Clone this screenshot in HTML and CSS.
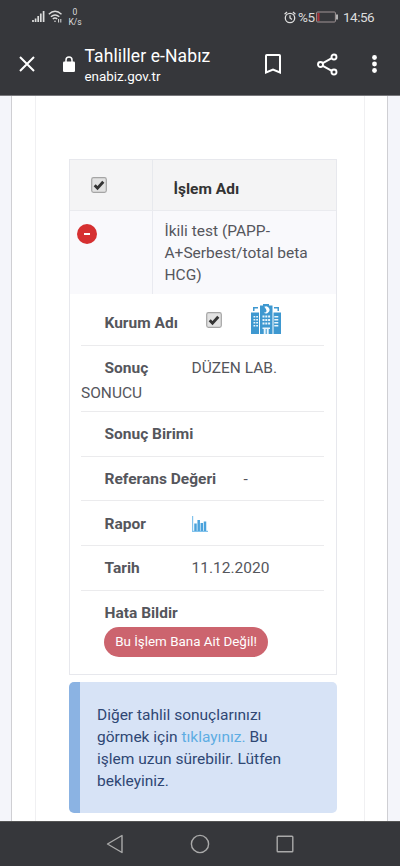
FILE: index.html
```html
<!DOCTYPE html>
<html lang="tr">
<head>
<meta charset="utf-8">
<title>Tahliller e-Nabız</title>
<link rel="stylesheet" href="styles.css">
</head>
<body>
<header class="top">
  <div class="status">
    <svg class="signal" width="13" height="13" viewBox="0 0 13 13"><path d="M1 12v-2M3.600 12V8.500M6.200 12V6M8.800 12V3.500M11.600 12V1" stroke="#ddd" stroke-width="1.700"/></svg>
    <svg class="wifi" width="15" height="13" viewBox="0 0 15 13" fill="none" stroke="#ddd" stroke-width="1.400"><path d="M.8 4.200Q7-1.500 13.500 4.200M2.900 6.800Q7 3.100 11.300 6.800M4.800 9Q7 7.100 9.200 9"/><circle cx="7" cy="11.200" r=".8" fill="#ddd" stroke="none"/><path d="M10.600 9v3.500M12.800 9v3.500" stroke-width="1"/></svg>
    <div class="rate"><span>0</span><span>K/s</span></div>
    <svg class="alarm" width="12" height="13" viewBox="0 0 12 13" fill="none" stroke="#ddd" stroke-width="1.300"><circle cx="6" cy="7" r="4.700"/><path d="M6 4.300V7l2 1.600M.6 3.300L3 1.100M11.400 3.300L9 1.100"/></svg>
    <span class="percent">%5</span>
    <svg class="battery" width="22" height="12" viewBox="0 0 22 12"><rect x=".6" y="1" width="18.800" height="10" rx="1" fill="none" stroke="#a09496"/><path d="M1.500 2h2v8h-2z" fill="#ad3339"/><path d="M21 3.500v5" stroke="#ddd" stroke-width="1.500"/></svg>
    <span class="clock">14:56</span>
  </div>
  <div class="toolbar">
    <svg class="close" width="16" height="16" viewBox="0 0 16 16"><path d="M1 1l14 14M15 1L1 15" stroke="#fff" stroke-width="2"/></svg>
    <svg class="lock" width="12" height="16" viewBox="0 0 12 16"><rect y="5.500" width="12" height="10.500" rx="1.300" fill="#fff"/><path d="M3 6V4a3 3 0 0 1 6 0v2" fill="none" stroke="#fff" stroke-width="1.500"/></svg>
    <div class="site"><div class="title">Tahliller e-Nabız</div><div class="host">enabiz.gov.tr</div></div>
    <svg class="mark" width="16" height="20" viewBox="0 0 16 20"><path d="M1 1.800q0-.8.800-.8h12.400q.8 0 .8.800V18.500l-7-3-7 3z" fill="none" stroke="#fff" stroke-width="2"/></svg>
    <svg class="share" width="21" height="23" viewBox="0 0 21 23" fill="none" stroke="#fff" stroke-width="1.900"><path d="M5.800 10.200l9-5M5.800 12.800l9 5"/><circle cx="3.500" cy="11.500" r="2.500"/><circle cx="17" cy="4" r="2.500"/><circle cx="17" cy="19" r="2.500"/></svg>
    <svg class="more" width="5" height="18" viewBox="0 0 5 18" fill="#fff"><circle cx="2.500" cy="2.500" r="2.400"/><circle cx="2.500" cy="9" r="2.400"/><circle cx="2.500" cy="15.500" r="2.400"/></svg>
  </div>
</header>
<main class="page">
  <div class="sheet">
    <div class="column">
      <section class="table">
        <div class="head">
          <div class="cell"><svg class="check" width="16" height="16" viewBox="0 0 16 16"><use href="#tick"/></svg></div>
          <div class="name">İşlem Adı</div>
        </div>
        <div class="test">
          <div class="cell"><span class="minus"></span></div>
          <div class="name">İkili test (PAPP-<br>A+Serbest/total beta<br>HCG)</div>
        </div>
        <div class="details">
          <div class="row org"><b>Kurum Adı</b>
            <svg class="check" width="16" height="16" viewBox="0 0 16 16"><g id="tick"><rect x=".7" y=".7" width="14.600" height="14.600" rx="1.800" fill="#e2e2e2" stroke="#a5a5a5" stroke-width="1.200"/><path d="M3.700 8.300l2.800 2.900L12.300 4.800" fill="none" stroke="#343434" stroke-width="2.900"/></g></svg>
            <svg class="hospital" width="30" height="30" viewBox="0 0 30 30"><path fill="#3e98d0" d="M9 1.500h3V0h6v1.500h3.500V30H9zM0 8.500h8V30H0zM22.500 8.500H30V30h-7.500zM2 3h5v1.400H3.500V7H2zM23 3h5v4h-1.500V4.400H23z"/><path d="M13.300 2.800a3.500 3.500 0 1 1-.4 5.900q5.200-.4.400-5.900z" fill="#fff"/><g fill="#e8f5fc"><path d="M11.500 11.500h2v2h-2zM14.300 11.500h2v2h-2zM17.100 11.500h2v2h-2zM11.500 15h2v2h-2zM14.300 15h2v2h-2zM17.100 15h2v2h-2zM11.500 18.500h2v2h-2zM14.300 18.500h2v2h-2zM17.100 18.500h2v2h-2zM11.500 23.500h7.500V25h-7.500zM12.700 25h2v5h-2zM15.700 25h2v5h-2z"/><path d="M2.500 12h1.800v1.600H2.500zM5.200 12H7v1.600H5.200zM2.500 15h1.800v1.600H2.500zM5.200 15H7v1.600H5.200zM2.500 18h1.800v1.600H2.500zM5.200 18H7v1.600H5.200zM2.500 21h1.800v1.600H2.500zM5.200 21H7v1.600H5.200zM23.300 12h4v1.500h-4zM23.300 15h4v1.500h-4zM23.300 18h4v1.500h-4zM23.300 21h4v1.500h-4z"/></g></svg>
          </div>
          <div class="row result"><b>Sonuç</b><span class="lab">DÜZEN LAB.</span><br>SONUCU</div>
          <div class="row"><b class="unit">Sonuç Birimi</b></div>
          <div class="row"><b class="ref">Referans Değeri</b><span class="dash">-</span></div>
          <div class="row"><b class="label">Rapor</b><svg class="chart" width="16" height="16" viewBox="0 0 16 16"><path d="M.6 0v15.400H16" fill="none" stroke="#83c3ec" stroke-width="1.200"/><path d="M3.500 15V7.500M6.700 15V4M9.800 15V7M13 15V5.500" stroke="#4ba3dc" stroke-width="2.500"/></svg></div>
          <div class="row"><b class="label">Tarih</b><span class="date">11.12.2020</span></div>
          <div class="row report"><b>Hata Bildir</b><button class="pill">Bu İşlem Bana Ait Değil!</button></div>
        </div>
      </section>
      <aside class="notice">Diğer tahlil sonuçlarınızı<br>görmek için <a>tıklayınız.</a> Bu<br>işlem uzun sürebilir. Lütfen<br>bekleyiniz.</aside>
    </div>
  </div>
</main>
<nav class="keys">
  <svg width="18" height="20" viewBox="0 0 18 20"><path d="M16 1.500v17L1.500 10z" fill="none" stroke="#aaa" stroke-width="1.400" stroke-linejoin="round"/></svg>
  <svg width="20" height="20" viewBox="0 0 20 20"><circle cx="10" cy="10" r="8.600" fill="none" stroke="#aaa" stroke-width="1.400"/></svg>
  <svg width="18" height="18" viewBox="0 0 18 18"><rect x="1.200" y="1.200" width="15.600" height="15.600" rx=".8" fill="none" stroke="#aaa" stroke-width="1.400"/></svg>
</nav>
</body>
</html>
```
FILE: styles.css
```css
* { box-sizing: border-box; }
body { margin: 0; width: 400px; height: 866px; overflow: hidden; display: flex; flex-direction: column; font: 15.5px/22px Roboto, sans-serif; color: #55565c; background: #fff; }
svg { display: block; flex: none; }
.top { height: 96px; flex: none; background: #36373b; color: #fff; border-bottom: 1px solid #77777b; }
.status { height: 34px; display: flex; align-items: center; padding-left: 32px; color: #ddd; white-space: nowrap; }
.signal, .wifi { margin-top: -1px; }
.wifi { margin-left: 3px; }
.rate { width: 14px; margin: 0 0 0 5px; display: flex; flex-direction: column; align-items: center; font-size: 8.500px; line-height: 10px; }
.alarm { margin-left: 202px; }
.percent { margin-left: 2px; width: 17px; font-size: 13.500px; letter-spacing: -.5px; }
.battery { margin-left: 1px; }
.clock { margin-left: 5px; font-size: 13.500px; letter-spacing: -.5px; }
.toolbar { height: 61px; display: flex; align-items: center; padding-left: 19px; }
.close, .lock, .mark, .share, .more { margin-top: -1px; }
.lock { margin-left: 28px; }
.site { width: 180px; margin-left: 9.500px; padding-top: 3px; }
.title { font-size: 17.500px; line-height: 21px; letter-spacing: .1px; white-space: nowrap; }
.host { font-size: 13.400px; line-height: 19px; }
.mark { margin-left: .5px; }
.share { margin-left: 36px; }
.more { margin-left: 34px; }
.page { height: 725px; flex: none; padding: 0 12px 0 11px; background: #f4f5fa; }
.sheet { height: 100%; padding: 0 22px 0 23px; background: #fff; border-left: 1px solid #cfcfd3; border-right: 1px solid #cfcfd3; }
.column { height: 100%; padding: 63px 27px 0 33px; border-left: 1px solid #f0f0f2; border-right: 1px solid #f0f0f2; }
.table { height: 516px; border: 1px solid #e7e8ed; color: #55565c; }
.head { height: 51px; display: grid; grid-template-columns: 83px 1fr; background: #f4f4f5; border-bottom: 1px solid #eaebef; color: #333; font-weight: 700; }
.head .cell { padding: 17px 0 0 21px; border-right: 1px solid #e7e9ed; }
.head .name { padding: 18px 0 0 20.500px; }
.test { height: 83px; display: grid; grid-template-columns: 83px 1fr; background: #f9f9fc; }
.test .cell { padding: 13px 0 0 7px; border-right: 1px solid #e9eaf0; }
.minus { display: flex; align-items: center; justify-content: center; width: 20px; height: 20px; border-radius: 50%; background: #d63031; }
.minus::before { content: ""; width: 6px; height: 2px; background: #fff; }
.test .name { padding: 9px 0 0 11.500px; white-space: nowrap; }
.details { padding: 0 12px 0 11px; }
.row { height: 44.700px; padding: 1px 0 0 23.500px; border-bottom: 1px solid #ebebed; display: flex; align-items: center; white-space: nowrap; }
.org { height: 52px; padding-top: 0; align-items: flex-start; }
.org b { width: 101.500px; padding-top: 18px; }
.org .check { margin-top: 18px; }
.hospital { margin: 10px 0 0 29px; }
.result { display: block; height: 66px; padding: 10px 0 0; line-height: 25px; }
.result b { display: inline-block; width: 87px; margin-left: 23.500px; }
.label { width: 87px; }
.ref { width: 139px; }
.report { display: block; height: 83px; padding-top: 11px; border: 0; }
.report b { display: block; }
.pill { display: block; width: 164px; height: 30px; margin: 3px 0 0 -.5px; padding: 0; border: 0; border-radius: 15px; background: #cc646e; color: #fff; font: 13.400px Roboto, sans-serif; text-align: center; }
.notice { height: 131px; margin-top: 7px; padding: 22px 0 0 17px; border-left: 11px solid #8bb3e3; border-radius: 5px; background: #d7e3f6; color: #2f4774; white-space: nowrap; }
.notice a { color: #5eade3; }
.keys { height: 45px; flex: none; display: flex; align-items: center; justify-content: center; gap: 66px; background: #36373b; border-top: 1px solid #555; }
```
